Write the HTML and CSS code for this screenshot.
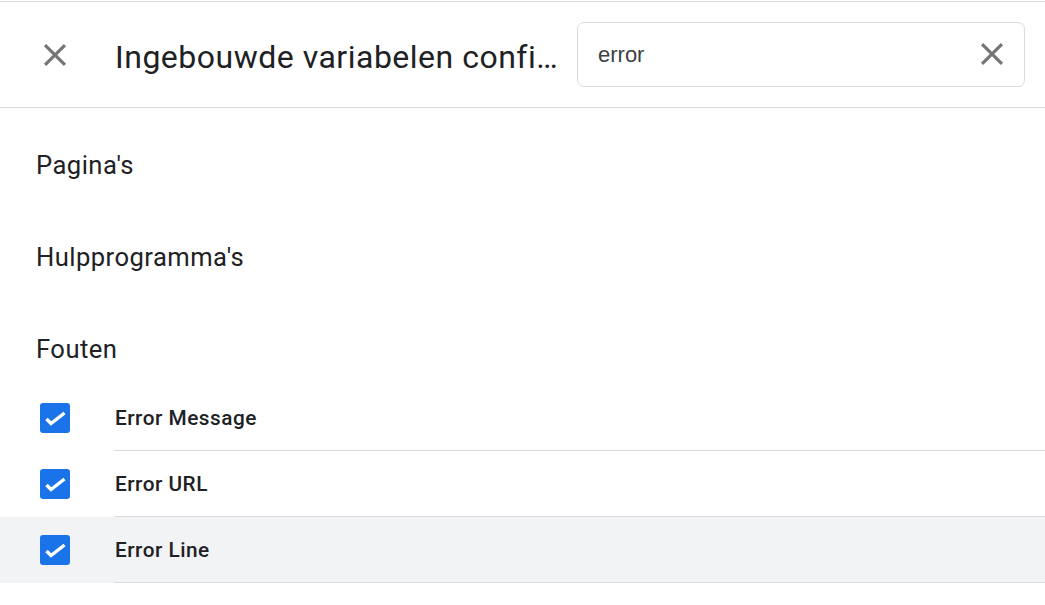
FILE: index.html
```html
<!DOCTYPE html>
<html lang="nl">
<head>
<meta charset="utf-8">
<title>Ingebouwde variabelen configureren</title>
<link rel="stylesheet" href="styles.css">
</head>
<body>
<div class="panel">
  <header class="header">
    <button class="icon-btn close-btn" aria-label="Sluiten">
      <svg viewBox="0 0 24 24" width="38" height="38"><path d="M19 6.41 17.59 5 12 10.59 6.41 5 5 6.41 10.59 12 5 17.59 6.41 19 12 13.41 17.59 19 19 17.59 13.41 12z" fill="#757575"/></svg>
    </button>
    <h1 class="title">Ingebouwde variabelen configureren</h1>
    <div class="search">
      <span class="search-text">error</span>
      <button class="icon-btn clear-btn" aria-label="Wissen">
        <svg viewBox="0 0 24 24" width="38" height="38"><path d="M19 6.41 17.59 5 12 10.59 6.41 5 5 6.41 10.59 12 5 17.59 6.41 19 12 13.41 17.59 19 19 17.59 13.41 12z" fill="#757575"/></svg>
      </button>
    </div>
  </header>

  <main class="content">
    <section class="group">
      <h2 class="group-title">Pagina's</h2>
    </section>
    <section class="group">
      <h2 class="group-title">Hulpprogramma's</h2>
    </section>
    <section class="group group-last">
      <h2 class="group-title">Fouten</h2>
      <ul class="rows">
        <li class="row">
          <span class="cb-cell"><span class="checkbox"><svg viewBox="0 0 30 30" width="30" height="30"><polyline points="6.5,16 11,20.5 24.5,10" fill="none" stroke="#fff" stroke-width="3.4"/></svg></span></span>
          <span class="label">Error Message</span>
        </li>
        <li class="row">
          <span class="cb-cell"><span class="checkbox"><svg viewBox="0 0 30 30" width="30" height="30"><polyline points="6.5,16 11,20.5 24.5,10" fill="none" stroke="#fff" stroke-width="3.4"/></svg></span></span>
          <span class="label">Error URL</span>
        </li>
        <li class="row row-hover">
          <span class="cb-cell"><span class="checkbox"><svg viewBox="0 0 30 30" width="30" height="30"><polyline points="6.5,16 11,20.5 24.5,10" fill="none" stroke="#fff" stroke-width="3.4"/></svg></span></span>
          <span class="label">Error Line</span>
        </li>
      </ul>
    </section>
  </main>
</div>
</body>
</html>
```

FILE: styles.css
```css
* { box-sizing: border-box; }

html, body {
  margin: 0;
  padding: 0;
  background: #fff;
}

body {
  font-family: Roboto, "Liberation Sans", Arial, sans-serif;
  color: #202124;
  width: 1045px;
  height: 605px;
  overflow: hidden;
}

.panel {
  padding-top: 1px;
}

.header {
  display: flex;
  align-items: center;
  height: 107px;
  border-top: 1px solid #dadce0;
  border-bottom: 1px solid #dadce0;
  padding: 0 20px 1px 36px;
}

.icon-btn {
  border: 0;
  background: none;
  padding: 0;
  margin: 0;
  display: flex;
  align-items: center;
  justify-content: center;
  cursor: pointer;
}

.close-btn {
  width: 38px;
  height: 38px;
  flex: none;
  margin-top: 1px;
}

.title {
  flex: 1;
  min-width: 0;
  margin: 0 4px 0 41px;
  font-size: 32px;
  font-weight: 400;
  line-height: 40px;
  letter-spacing: 0.5px;
  white-space: nowrap;
  overflow: hidden;
  text-overflow: ellipsis;
  color: #202124;
  padding-top: 5px;
}

.search {
  flex: none;
  width: 448px;
  height: 65px;
  border: 1px solid #dadce0;
  border-radius: 7px;
  display: flex;
  align-items: center;
  padding: 0 13px 0 20px;
}

.search-text {
  flex: 1;
  font-family: "Liberation Sans", Arial, sans-serif;
  font-size: 22px;
  color: #3c4043;
  padding-top: 1px;
}

.clear-btn {
  width: 38px;
  height: 38px;
}

.content {
  padding-top: 41px;
}

.group {
  padding-bottom: 60px;
}

.group-last {
  padding-bottom: 0;
}

.group-title {
  margin: 0 0 0 36px;
  font-size: 25.6px;
  font-weight: 400;
  line-height: 32px;
  letter-spacing: 0.45px;
  color: #202124;
}

.rows {
  list-style: none;
  margin: 20px 0 0 0;
  padding: 0;
}

.row {
  display: flex;
  height: 66px;
}

.row-hover {
  background: #f1f3f4;
}

.cb-cell {
  width: 114px;
  flex: none;
  display: flex;
  align-items: center;
  padding-left: 40px;
}

.checkbox {
  width: 30px;
  height: 30px;
  border-radius: 3px;
  background: #1a73e8;
  display: block;
}

.checkbox svg {
  display: block;
}

.label {
  flex: 1;
  display: flex;
  align-items: center;
  padding-left: 1px;
  border-top: 1px solid transparent;
  border-bottom: 1px solid #dadce0;
  font-size: 20.8px;
  font-weight: 500;
  letter-spacing: 0.5px;
  color: #202124;
}
```
